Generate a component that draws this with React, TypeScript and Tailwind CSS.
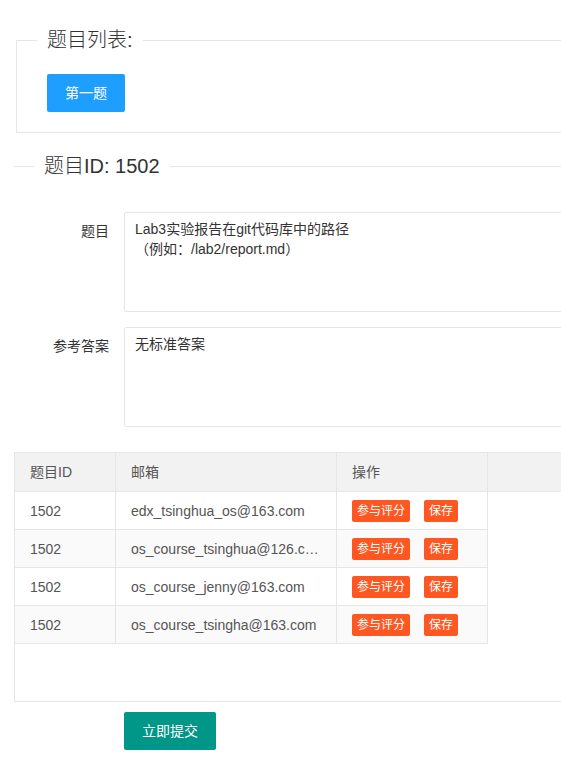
import React from 'react'

type Row = {
    id: string
    email: string
}

const rows: Row[] = [
    { id: '1502', email: 'edx_tsinghua_os@163.com' },
    { id: '1502', email: 'os_course_tsinghua@126.com' },
    { id: '1502', email: 'os_course_jenny@163.com' },
    { id: '1502', email: 'os_course_tsingha@163.com' },
]

const font = "font-['Liberation_Sans','Noto_Sans_CJK_SC',sans-serif]"

const FormItem: React.FC<{ label: string; value: string }> = ({ label, value }) => (
    <div className="flex mb-[15px]">
        <label className="w-[124px] shrink-0 pr-[15px] py-[9px] text-right text-sm leading-5 text-[#333]">
            {label}
        </label>
        <textarea
            readOnly
            value={value}
            className="flex-1 h-[100px] resize-none border border-[#e6e6e6] rounded-[2px] px-[10px] py-[6px] text-sm leading-5 text-[#333] outline-none"
        />
    </div>
)

const App: React.FC = () => {
    return (
        <div className={`w-full overflow-hidden bg-white ${font}`}>
            <div className="w-[900px] pt-[26px] pb-[22px]">
                {/* 题目列表 */}
                <fieldset className="ml-[16px] border border-[#e6e6e6] pb-[20px]">
                    <legend className="ml-5 px-[10px] text-[20px] leading-[28px] font-light text-[#333]">
                        题目列表:
                    </legend>
                    <div className="pt-5 px-[30px]">
                        <button className="h-[38px] px-[18px] rounded-[2px] bg-[#1E9FFF] text-sm text-white">
                            第一题
                        </button>
                    </div>
                </fieldset>

                <fieldset className="ml-[14px] mt-[19px] mb-[32px] border-t border-[#e6e6e6]">
                    <legend className="ml-5 px-[10px] text-[20px] leading-[28px] font-light text-[#333]">
                        题目ID: 1502
                    </legend>
                </fieldset>

                <FormItem
                    label="题目"
                    value={'Lab3实验报告在git代码库中的路径\n（例如：/lab2/report.md）'}
                />
                <FormItem label="参考答案" value="无标准答案" />

                {/* 评分表 */}
                <div className="ml-[14px] mt-[25px] h-[250px] border border-[#e6e6e6] text-sm text-[#555]">
                    <div className="flex h-[39px] bg-[#f2f2f2] border-b border-[#e6e6e6]">
                        <div className="w-[101px] px-[15px] flex items-center border-r border-[#e6e6e6]">题目ID</div>
                        <div className="w-[221px] px-[15px] flex items-center border-r border-[#e6e6e6]">邮箱</div>
                        <div className="w-[151px] px-[15px] flex items-center border-r border-[#e6e6e6]">操作</div>
                        <div className="flex-1" />
                    </div>
                    {rows.map((row, i) => (
                        <div
                            key={i}
                            className={`flex w-[473px] h-[38px] border-b border-[#e6e6e6] ${i % 2 === 1 ? 'bg-[#fafafa]' : 'bg-white'}`}
                        >
                            <div className="w-[101px] px-[15px] flex items-center border-r border-[#e6e6e6]">{row.id}</div>
                            <div className="w-[221px] px-[15px] flex items-center border-r border-[#e6e6e6] min-w-0">
                                <span className="truncate">{row.email}</span>
                            </div>
                            <div className="w-[151px] px-[15px] flex items-center gap-[14px] border-r border-[#e6e6e6]">
                                <button className="h-[22px] px-[5px] rounded-[2px] bg-[#FF5722] text-xs text-white">
                                    参与评分
                                </button>
                                <button className="h-[22px] px-[5px] rounded-[2px] bg-[#FF5722] text-xs text-white">
                                    保存
                                </button>
                            </div>
                        </div>
                    ))}
                </div>

                <button className="ml-[124px] mt-[10px] h-[38px] px-[18px] rounded-[2px] bg-[#009688] text-sm text-white">
                    立即提交
                </button>
            </div>
        </div>
    )
}

export default App
